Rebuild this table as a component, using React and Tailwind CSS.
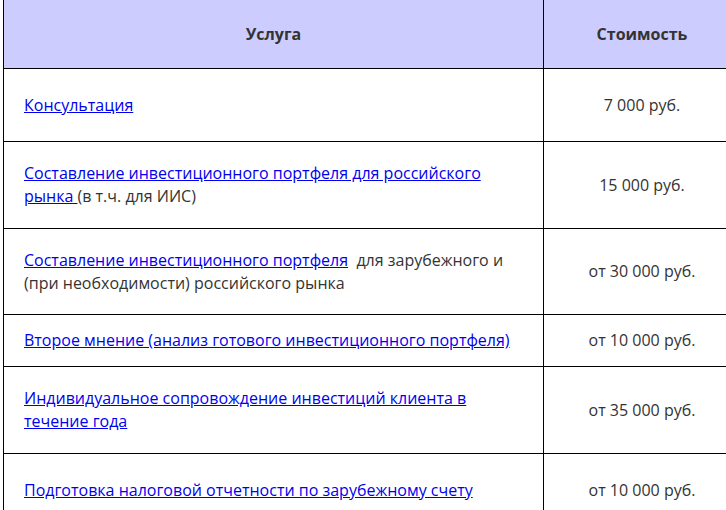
export default function App() {
  const rows = [
    { h: 73, content: (<a href="#" className="text-[#0000ee] underline">Консультация</a>), price: "7 000 руб." },
    { h: 87, content: (<><a href="#" className="text-[#0000ee] underline">Составление инвестиционного портфеля для российского рынка </a>(в т.ч. для ИИС)</>), price: "15 000 руб." },
    { h: 86, content: (<><a href="#" className="text-[#0000ee] underline">Составление инвестиционного портфеля</a>&nbsp; для зарубежного и (при необходимости) российского рынка</>), price: "от 30 000 руб." },
    { h: 52, content: (<a href="#" className="text-[#0000ee] underline">Второе мнение (анализ готового инвестиционного портфеля)</a>), price: "от 10 000 руб." },
    { h: 87, content: (<a href="#" className="text-[#0000ee] underline">Индивидуальное сопровождение инвестиций клиента в течение года</a>), price: "от 35 000 руб." },
    { h: 73, content: (<a href="#" className="text-[#0000ee] underline">Подготовка налоговой отчетности по зарубежному счету</a>), price: "от 10 000 руб." },
  ];
  return (
    <div className="w-[726px] h-[510px] overflow-hidden bg-white" style={{ fontFamily: '"Open Sans", sans-serif' }}>
      <table className="ml-[3px] -mt-px w-[738px] border-collapse text-[16px] leading-[23px] text-[#333]">
        <thead>
          <tr className="bg-[#ccccff]">
            <th className="h-[69px] border border-black w-[540px] text-center font-bold align-middle">Услуга</th>
            <th className="h-[69px] border border-black text-center font-bold align-middle">Стоимость</th>
          </tr>
        </thead>
        <tbody>
          {rows.map((r, i) => (
            <tr key={i}>
              <td className="border border-black pl-5 pr-5 align-middle" style={{ height: r.h }}>{r.content}</td>
              <td className="border border-black text-center align-middle">{r.price}</td>
            </tr>
          ))}
        </tbody>
      </table>
    </div>
  );
}
